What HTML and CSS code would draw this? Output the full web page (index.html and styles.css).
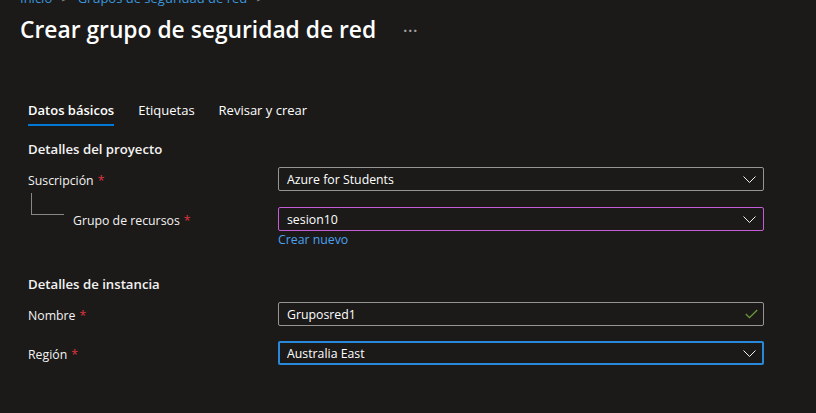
FILE: index.html
```html
<!DOCTYPE html>
<html lang="es">
<head>
<meta charset="utf-8">
<title>Crear grupo de seguridad de red</title>
<link rel="stylesheet" href="styles.css">
</head>
<body>
<div class="page">
  <nav class="breadcrumb">
    <a href="#">Inicio</a><span class="sep">&gt;</span><a href="#">Grupos de seguridad de red</a><span class="sep">&gt;</span>
  </nav>
  <header class="title-row">
    <h1 class="title">Crear grupo de seguridad de red</h1>
    <span class="more">&middot;&middot;&middot;</span>
  </header>

  <div class="tabs">
    <span class="tab active">Datos básicos</span>
    <span class="tab">Etiquetas</span>
    <span class="tab">Revisar y crear</span>
  </div>

  <section class="section">
    <h2 class="section-title">Detalles del proyecto</h2>
    <div class="row">
      <div class="label">Suscripción <span class="req">*</span></div>
      <div class="control">
        <div class="field">
          <span class="value">Azure for Students</span>
          <svg class="chev" width="13" height="7" viewBox="0 0 13 7"><path d="M0.5 0.5 L6.5 6.5 L12.5 0.5" fill="none" stroke="#f3f2f1" stroke-width="1"/></svg>
        </div>
      </div>
    </div>
    <div class="row row-tight">
      <div class="label label-child"><span class="tree"></span>Grupo de recursos <span class="req">*</span></div>
      <div class="control">
        <div class="field field-purple">
          <span class="value">sesion10</span>
          <svg class="chev" width="13" height="7" viewBox="0 0 13 7"><path d="M0.5 0.5 L6.5 6.5 L12.5 0.5" fill="none" stroke="#f3f2f1" stroke-width="1"/></svg>
        </div>
        <a class="link" href="#">Crear nuevo</a>
      </div>
    </div>
  </section>

  <section class="section section-2">
    <h2 class="section-title">Detalles de instancia</h2>
    <div class="row">
      <div class="label">Nombre <span class="req">*</span></div>
      <div class="control">
        <div class="field">
          <span class="value">Gruposred1</span>
          <svg class="check" width="13" height="10" viewBox="0 0 13 10"><path d="M0.8 5 L4.5 8.7 L12.2 1" fill="none" stroke="#6f9b3a" stroke-width="1.3"/></svg>
        </div>
      </div>
    </div>
    <div class="row row-r">
      <div class="label">Región <span class="req">*</span></div>
      <div class="control">
        <div class="field field-focus">
          <span class="value">Australia East</span>
          <svg class="chev" width="13" height="7" viewBox="0 0 13 7"><path d="M0.5 0.5 L6.5 6.5 L12.5 0.5" fill="none" stroke="#f3f2f1" stroke-width="1"/></svg>
        </div>
      </div>
    </div>
  </section>
</div>
</body>
</html>
```

FILE: styles.css
```css
* { box-sizing: border-box; }
html, body {
  margin: 0;
  background: #1b1a19;
  height: 100%;
  overflow: hidden;
}
body {
  font-family: "Open Sans", "Noto Sans", sans-serif;
  color: #f3f2f1;
  font-size: 12.3px;
}
.page {
  padding-left: 20px;
}
.breadcrumb {
  height: 16px;
  margin-top: -10px;
  line-height: 16px;
  font-size: 13px;
}
.breadcrumb a {
  color: #3a96dd;
  text-decoration: none;
}
.breadcrumb .sep {
  color: #8a8886;
  margin: 0 9px;
}
.title-row {
  display: flex;
  align-items: center;
  margin-top: 9px;
  height: 30px;
}
.title {
  margin: 0;
  font-size: 22.8px;
  font-weight: 600;
  color: #ffffff;
  line-height: 30px;
}
.more {
  margin-left: 27px;
  color: #a19f9d;
  font-size: 14px;
  letter-spacing: 1px;
  font-weight: 700;
}
.tabs {
  display: flex;
  gap: 24px;
  margin-top: 55px;
  padding-left: 8px;
}
.tab {
  font-size: 13px;
  line-height: 20px;
  padding-bottom: 4px;
  border-bottom: 2px solid transparent;
  color: #ffffff;
}
.tab.active {
  font-weight: 600;
  border-bottom-color: #0078d4;
}
.section {
  padding-left: 8px;
}
.section-title {
  margin: 13px 0 0;
  font-size: 13.2px;
  font-weight: 600;
  line-height: 20px;
  color: #f3f2f1;
}
.section-2 .section-title {
  margin-top: 25px;
}
.row {
  display: grid;
  grid-template-columns: 250px 486px;
  margin-top: 8px;
}
.row-tight { margin-top: 16px; }
.row-r { margin-top: 15px; }
.label {
  display: flex;
  align-items: center;
  height: 24px;
  padding-top: 2px;
  font-size: 12.3px;
  color: #f3f2f1;
}
.req {
  color: #e0343e;
  margin-left: 4px;
}
.tree {
  align-self: flex-start;
  width: 33px;
  height: 22px;
  margin-top: -16px;
  margin-left: 3px;
  margin-right: 9px;
  border-left: 1px solid #8a8886;
  border-bottom: 1px solid #8a8886;
}
.control {
  display: flex;
  flex-direction: column;
}
.field {
  height: 24px;
  border: 1px solid #979593;
  border-radius: 2px;
  display: flex;
  align-items: center;
  justify-content: space-between;
  padding: 0 7px 0 8px;
  color: #ffffff;
}
.field-purple {
  border-color: #c55bd6;
}
.field-focus {
  border: 2px solid #2a88da;
  padding: 0 6px 0 7px;
}
.value {
  font-size: 12.3px;
}
.check { margin-right: -2px; }
.link {
  color: #4ba0ef;
  text-decoration: none;
  font-size: 12.3px;
  line-height: 18px;
}
```
